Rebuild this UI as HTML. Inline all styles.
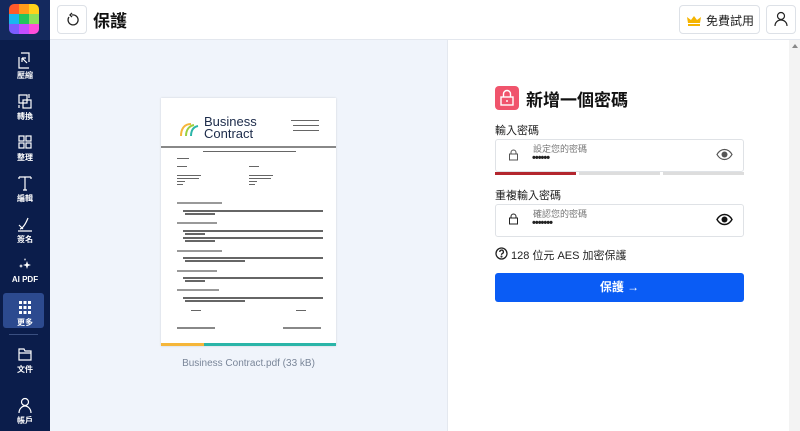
<!DOCTYPE html>
<html><head><meta charset="utf-8"><style>
*{box-sizing:border-box;margin:0;padding:0}
body{width:800px;height:431px;overflow:hidden;font-family:"Liberation Sans","Noto Sans CJK TC",sans-serif;background:#fff;position:relative}
.sb{position:absolute;left:0;top:0;width:50px;height:431px;background:#0b1d4b}
.logo{position:absolute;left:9px;top:4px;width:30px;height:30px;border-radius:5px;overflow:hidden;display:grid;grid-template-columns:repeat(3,1fr)}
.logo div{width:10px;height:10px}
.sbtop{position:absolute;left:0;top:0;width:50px;height:40px;background:#14295e}
.it{position:absolute;left:0;width:50px;text-align:center;color:#fff;font-size:8px;font-weight:bold}
.it svg{display:block;margin:0 auto 1px}
.hdr{position:absolute;left:50px;top:0;right:0;height:40px;background:#fff;border-bottom:1px solid #e3e7ee}
.btn{position:absolute;border:1px solid #dde1e7;border-radius:4px;background:#fff}
.left{position:absolute;left:50px;top:40px;width:397px;height:391px;background:#f0f4fb}
.right{position:absolute;left:447px;top:40px;width:353px;height:391px;background:#fff;border-left:1px solid #e4e8ef}
.doc{position:absolute;left:161px;top:98px;width:175px;height:248px;background:#fff;box-shadow:0 0 2px rgba(0,0,0,.15)}
.ln{position:absolute;height:1.5px;background:#555}
.t{position:absolute;height:1.5px;background:#666}
.h{position:absolute;height:2px;background:#999}
.inp{position:absolute;left:495px;width:249px;height:33px;border:1px solid #dfe2e6;border-radius:3px}
.lbl{position:absolute;left:495px;font-size:11px;color:#222}
</style></head><body>
<div class="sb"></div>
<div class="sbtop"></div>
<div class="logo">
<div style="background:#ff5a2a"></div><div style="background:#ff9a1a"></div><div style="background:#ffd21a"></div>
<div style="background:#19b6f0"></div><div style="background:#22c55e"></div><div style="background:#8de05a"></div>
<div style="background:#7c5cff"></div><div style="background:#c44dff"></div><div style="background:#ff4ddb"></div>
</div>
<div class="it" style="top:52px"><svg width="16" height="17" viewBox="0 0 16 17" fill="none" stroke="#fff" stroke-width="1.2"><path d="M4 1h8v9M2 5v11h10M5 6l5 5M5 6v4M5 6h4"/></svg>壓縮</div>
<div class="it" style="top:93px"><svg width="16" height="17" viewBox="0 0 16 17" fill="none" stroke="#fff" stroke-width="1.2"><rect x="2" y="2" width="8" height="8"/><rect x="6" y="7" width="8" height="8"/><path d="M12 1v4M2 12v3"/></svg>轉換</div>
<div class="it" style="top:134px"><svg width="16" height="17" viewBox="0 0 16 17" fill="none" stroke="#fff" stroke-width="1.2"><rect x="2" y="2" width="5" height="5"/><rect x="9" y="2" width="5" height="5"/><rect x="2" y="9" width="5" height="5"/><rect x="9" y="9" width="5" height="5"/></svg>整理</div>
<div class="it" style="top:175px"><svg width="16" height="17" viewBox="0 0 16 17" fill="none" stroke="#fff" stroke-width="1.2"><path d="M2 2h12M2 2v2M14 2v2M8 2v13M6 15h4"/></svg>編輯</div>
<div class="it" style="top:216px"><svg width="16" height="17" viewBox="0 0 16 17" fill="none" stroke="#fff" stroke-width="1.2"><path d="M3 13c3-1 6-6 8-11M2 9l4 4M1 15h14"/></svg>簽名</div>
<div class="it" style="top:257px"><svg width="16" height="17" viewBox="0 0 16 17" fill="#fff"><path d="M10 4l1 3 3 1-3 1-1 3-1-3-3-1 3-1zM4 7l.6 1.4L6 9l-1.4.6L4 11l-.6-1.4L2 9l1.4-.6zM8 1l.4 1L9 2.5l-.6.3L8 4l-.4-1.2L7 2.5l.6-.5z"/></svg>AI PDF</div>
<div style="position:absolute;left:3px;top:293px;width:41px;height:35px;background:#2c4a8f;border-radius:3px"></div>
<div class="it" style="top:299px"><svg width="16" height="17" viewBox="0 0 16 17" fill="#fff"><rect x="2" y="2" width="3" height="3"/><rect x="6.5" y="2" width="3" height="3"/><rect x="11" y="2" width="3" height="3"/><rect x="2" y="7" width="3" height="3"/><rect x="6.5" y="7" width="3" height="3"/><rect x="11" y="7" width="3" height="3"/><rect x="2" y="12" width="3" height="3"/><rect x="6.5" y="12" width="3" height="3"/><rect x="11" y="12" width="3" height="3"/></svg>更多</div>
<div style="position:absolute;left:9px;top:334px;width:29px;height:1px;background:#3a4f80"></div>
<div class="it" style="top:346px"><svg width="16" height="17" viewBox="0 0 16 17" fill="none" stroke="#fff" stroke-width="1.2"><path d="M2 3h5l1 2h6v9H2zM2 7h12"/></svg>文件</div>
<div class="it" style="top:397px"><svg width="16" height="17" viewBox="0 0 16 17" fill="none" stroke="#fff" stroke-width="1.2"><circle cx="8" cy="5" r="3.5"/><path d="M2 16c0-4 3-7 6-7s6 3 6 7"/></svg>帳戶</div>

<div class="hdr"></div>
<div class="btn" style="left:57px;top:5px;width:30px;height:29px"><svg width="28" height="27" viewBox="0 0 28 27" fill="none" stroke="#222" stroke-width="1.3"><path d="M11 11a5 5 0 1 0 3-2"/><path d="M14 7l-2 2 2 2" /></svg></div>
<div style="position:absolute;left:93px;top:7px;font-size:17px;font-weight:bold;color:#111">保護</div>
<div class="btn" style="left:679px;top:5px;width:81px;height:29px"><svg style="position:absolute;left:6px;top:9px" width="16" height="11" viewBox="0 0 16 11"><path d="M1 2l4 3 3-4 3 4 4-3-1 6H2z" fill="#f5b400"/><rect x="2" y="9" width="12" height="2" fill="#f5b400"/></svg><span style="position:absolute;left:26px;top:6px;font-size:12px;color:#222">免費試用</span></div>
<div class="btn" style="left:766px;top:5px;width:30px;height:29px"><svg width="28" height="27" viewBox="0 0 28 27" fill="none" stroke="#222" stroke-width="1.2"><circle cx="14" cy="10" r="3.5"/><path d="M8 20c0-3.5 2.7-6 6-6s6 2.5 6 6"/></svg></div>

<div class="left"></div>
<div class="doc">
<svg style="position:absolute;left:18px;top:20px" width="22" height="20" viewBox="0 0 22 20" fill="none" stroke-width="2"><path d="M2 18c0-8 4-12 10-12" stroke="#f5b63a"/><path d="M7 18c0-6 3-10 8-11" stroke="#9bcf3f"/><path d="M12 18c0-5 2-9 7-10" stroke="#2bb5a8"/></svg>
<div style="position:absolute;left:43px;top:18px;font-size:13px;line-height:12px;color:#1c2b4a">Business<br>Contract</div>
<div class="t" style="left:130px;top:22px;width:28px;height:1px"></div>
<div class="t" style="left:132px;top:27px;width:26px;height:1px"></div>
<div class="t" style="left:132px;top:32px;width:26px;height:1px"></div>
<div class="ln" style="left:0;top:48px;width:175px;background:#888"></div>
<div class="t" style="left:42px;top:53px;width:93px;height:1px"></div>
<div class="t" style="left:16px;top:60px;width:12px;height:1px"></div>
<div class="t" style="left:16px;top:68px;width:10px;height:1px"></div><div class="t" style="left:88px;top:68px;width:10px;height:1px"></div>
<div class="t" style="left:16px;top:77px;width:24px;height:1px"></div><div class="t" style="left:88px;top:77px;width:24px;height:1px"></div>
<div class="t" style="left:16px;top:80px;width:22px;height:1px"></div><div class="t" style="left:88px;top:80px;width:22px;height:1px"></div>
<div class="t" style="left:16px;top:83px;width:8px;height:1px"></div><div class="t" style="left:88px;top:83px;width:8px;height:1px"></div>
<div class="t" style="left:16px;top:86px;width:6px;height:1px"></div><div class="t" style="left:88px;top:86px;width:6px;height:1px"></div>
<div class="h" style="left:16px;top:104px;width:45px"></div>
<div class="t" style="left:22px;top:112px;width:140px"></div><div class="t" style="left:24px;top:115px;width:30px"></div>
<div class="h" style="left:16px;top:124px;width:40px"></div>
<div class="t" style="left:22px;top:132px;width:140px"></div><div class="t" style="left:24px;top:135px;width:20px"></div>
<div class="t" style="left:22px;top:139px;width:140px"></div><div class="t" style="left:24px;top:142px;width:30px"></div>
<div class="h" style="left:16px;top:152px;width:45px"></div>
<div class="t" style="left:22px;top:159px;width:140px"></div><div class="t" style="left:24px;top:162px;width:60px"></div>
<div class="h" style="left:16px;top:172px;width:40px"></div>
<div class="t" style="left:22px;top:179px;width:140px"></div><div class="t" style="left:24px;top:182px;width:20px"></div>
<div class="h" style="left:16px;top:191px;width:42px"></div>
<div class="t" style="left:22px;top:199px;width:140px"></div><div class="t" style="left:24px;top:202px;width:60px"></div>
<div class="t" style="left:30px;top:212px;width:10px;height:1px"></div><div class="t" style="left:135px;top:212px;width:10px;height:1px"></div>
<div class="ln" style="left:16px;top:229px;width:38px;background:#888"></div>
<div class="ln" style="left:122px;top:229px;width:38px;background:#888"></div>
<div style="position:absolute;left:0;bottom:0;width:43px;height:3px;background:#f5b63a"></div>
<div style="position:absolute;left:43px;bottom:0;width:132px;height:3px;background:#2bb5a8"></div>
</div>
<div style="position:absolute;left:161px;top:358px;width:175px;text-align:center;font-size:10px;color:#7a8699">Business Contract.pdf (33 kB)</div>

<div class="right"></div>
<div style="position:absolute;left:789px;top:40px;width:11px;height:391px;background:#f3f3f3"></div>
<div style="position:absolute;left:792px;top:44px;width:0;height:0;border:3px solid transparent;border-bottom:4px solid #888;border-top:0"></div>
<div style="position:absolute;left:495px;top:86px;width:24px;height:24px;border-radius:4px;background:#f0546c"><svg width="24" height="24" viewBox="0 0 24 24" fill="none" stroke="#fff" stroke-width="1.4"><rect x="6" y="11" width="12" height="8"/><path d="M8.5 11V8a3.5 3.5 0 0 1 7 0v3"/><path d="M12 14v2"/></svg></div>
<div style="position:absolute;left:526px;top:86px;font-size:17px;font-weight:bold;color:#111">新增一個密碼</div>
<div class="lbl" style="top:122px">輸入密碼</div>
<div class="inp" style="top:139px"></div>
<div class="lbl" style="top:187px">重複輸入密碼</div>
<div class="inp" style="top:204px"></div>
<svg style="position:absolute;left:508px;top:149px" width="11" height="12" viewBox="0 0 11 12" fill="none" stroke="#555"><rect x="1.5" y="5" width="8" height="6"/><path d="M3 5V3.5a2.5 2.5 0 0 1 5 0V5"/></svg>
<svg style="position:absolute;left:508px;top:213px" width="11" height="12" viewBox="0 0 11 12" fill="none" stroke="#222"><rect x="1.5" y="5" width="8" height="6"/><path d="M3 5V3.5a2.5 2.5 0 0 1 5 0V5"/></svg>
<div style="position:absolute;left:533px;top:142px;font-size:9px;color:#777">設定您的密碼</div>
<div style="position:absolute;left:532px;top:152px;font-size:11px;color:#222;font-weight:bold;letter-spacing:-1px">••••••</div>
<div style="position:absolute;left:533px;top:207px;font-size:9px;color:#777">確認您的密碼</div>
<div style="position:absolute;left:532px;top:217px;font-size:11px;color:#222;font-weight:bold;letter-spacing:-1px">•••••••</div>
<svg style="position:absolute;left:716px;top:148px" width="17" height="13" viewBox="0 0 17 13"><path d="M1 6.5C3 3 6 1.5 8.5 1.5S14 3 16 6.5C14 10 11 11.5 8.5 11.5S3 10 1 6.5z" fill="none" stroke="#555" stroke-width="1.2"/><circle cx="8.5" cy="6.5" r="3" fill="#555"/></svg>
<svg style="position:absolute;left:716px;top:213px" width="17" height="13" viewBox="0 0 17 13"><path d="M1 6.5C3 3 6 1.5 8.5 1.5S14 3 16 6.5C14 10 11 11.5 8.5 11.5S3 10 1 6.5z" fill="none" stroke="#111" stroke-width="1.4"/><circle cx="8.5" cy="6.5" r="3" fill="#111"/></svg>
<div style="position:absolute;left:495px;top:172px;width:81px;height:3px;background:#b3262e"></div>
<div style="position:absolute;left:579px;top:172px;width:81px;height:3px;background:#ddd"></div>
<div style="position:absolute;left:663px;top:172px;width:81px;height:3px;background:#ddd"></div>
<svg style="position:absolute;left:495px;top:247px" width="13" height="13" viewBox="0 0 13 13" fill="none" stroke="#222" stroke-width="1.3"><circle cx="6.5" cy="6.5" r="5.5"/><path d="M4.8 5a1.8 1.8 0 1 1 2.4 1.6c-.6.3-.7.6-.7 1.3"/><circle cx="6.5" cy="9.6" r=".4" fill="#222"/></svg>
<div style="position:absolute;left:511px;top:247px;font-size:11px;color:#222">128 位元 AES 加密保護</div>
<div style="position:absolute;left:495px;top:273px;width:249px;height:29px;background:#0a5cf5;border-radius:3px;color:#fff;text-align:center;line-height:29px;font-size:12px"><b>保護</b> →</div>
</body></html>
